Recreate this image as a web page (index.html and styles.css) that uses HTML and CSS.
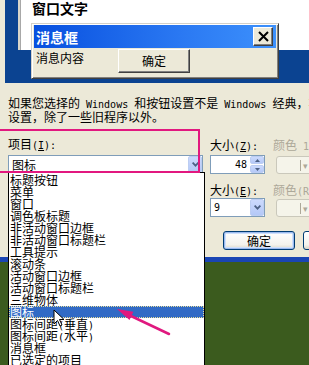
FILE: index.html
```html
<!DOCTYPE html>
<html>
<head>
<meta charset="utf-8">
<link rel="stylesheet" href="styles.css">
</head>
<body>
<div class="dialog">
  <div class="preview">
    <div class="win"><span class="wintext">窗口文字</span></div>
    <div class="msgbox">
      <div class="msg-title">
        <span class="msg-caption">消息框</span>
        <span class="close"><svg width="11" height="11" viewBox="0 0 11 11"><path d="M1 1L10 10M10 1L1 10" stroke="#000" stroke-width="2"/></svg></span>
      </div>
      <div class="msg-body">
        <span class="msg-text">消息内容</span>
        <span class="msg-btn">确定</span>
      </div>
    </div>
  </div>

  <p class="note">如果您选择的<span class="en"> Windows </span>和按钮设置不是<span class="en"> Windows </span>经典，将覆盖下列<br>设置，除了一些旧程序以外。</p>

  <div class="controls">
    <div class="col-item">
      <div class="label">项目<span class="en">(<u>I</u>):</span></div>
      <div class="combo wide">
        <span class="combo-text">图标</span>
        <span class="dd"><svg width="7" height="5" viewBox="0 0 7 5"><path d="M0.6 0.6L3.5 3.6L6.4 0.6" fill="none" stroke="#4d6185" stroke-width="1.8"/></svg></span>
      </div>
    </div>
    <div class="col-size">
      <div class="row lbl-row first">
        <span class="lbl">大小<span class="en">(<u>Z</u>):</span></span>
        <span class="lbl dis">颜色<span class="en"> 1</span></span>
      </div>
      <div class="row field-row">
        <div class="spin">
          <span class="spin-val en">48</span>
          <span class="spin-btns">
            <span class="sb"><svg width="5" height="3" viewBox="0 0 5 3"><path d="M0 3L2.5 0L5 3Z" fill="#4d6185"/></svg></span>
            <span class="sb"><svg width="5" height="3" viewBox="0 0 5 3"><path d="M0 0L2.5 3L5 0Z" fill="#4d6185"/></svg></span>
          </span>
        </div>
        <div class="colorbtn"><span class="sep"></span><span class="carrow">▾</span></div>
      </div>
      <div class="row lbl-row second">
        <span class="lbl">大小<span class="en">(<u>E</u>):</span></span>
        <span class="lbl dis">颜色<span class="en">(R)</span></span>
      </div>
      <div class="row field-row">
        <div class="combo small">
          <span class="combo-text en">9</span>
          <span class="dd"><svg width="7" height="5" viewBox="0 0 7 5"><path d="M0.6 0.6L3.5 3.6L6.4 0.6" fill="none" stroke="#4d6185" stroke-width="1.8"/></svg></span>
        </div>
        <div class="colorbtn"><span class="sep"></span><span class="carrow">▾</span></div>
      </div>
      <div class="row btn-row">
        <div class="xpbtn default">确定</div>
        <div class="xpbtn">取消</div>
      </div>
    </div>
  </div>
</div>

<ul class="droplist">
  <li>标题按钮</li>
  <li>菜单</li>
  <li>窗口</li>
  <li>调色板标题</li>
  <li>非活动窗口边框</li>
  <li>非活动窗口标题栏</li>
  <li>工具提示</li>
  <li>滚动条</li>
  <li>活动窗口边框</li>
  <li>活动窗口标题栏</li>
  <li>三维物体</li>
  <li class="sel">图标</li>
  <li>图标间距<span class="en">(</span>垂直<span class="en">)</span></li>
  <li>图标间距<span class="en">(</span>水平<span class="en">)</span></li>
  <li>消息框</li>
  <li>已选定的项目</li>
</ul>

<div class="pinkbox"></div>

<svg class="cursor" width="13" height="20" viewBox="0 0 13 20">
  <path d="M1 1L1 15L4.5 11.5L7 17L9 16L6.5 10.5L11 10.5Z" fill="#fff" stroke="#000" stroke-width="1" stroke-linejoin="round"/>
</svg>

<svg class="arrow" width="70" height="40" viewBox="0 0 70 40">
  <path d="M21 16L59 34" stroke="#e0197f" stroke-width="2.5" stroke-linecap="round"/>
  <path d="M7 9L23.4 11.8L19.5 20Z" fill="#e0197f"/>
</svg>
</body>
</html>
```

FILE: styles.css
```css
* {
  box-sizing: border-box;
}

html, body {
  margin: 0;
  padding: 0;
}

body {
  width: 309px;
  height: 365px;
  overflow: hidden;
  position: relative;
  background: #3b5b1e;
  font-family: "Noto Sans CJK SC", sans-serif;
  font-size: 12px;
  line-height: 12px;
  color: #000;
}

.en {
  font-family: "DejaVu Sans Mono", monospace;
  font-size: 10px;
}

.dialog {
  height: 262px;
  background: #ece9d8;
  border-bottom: 5px solid #1a45b4;
  overflow: hidden;
}

/* preview */
.preview {
  position: relative;
  margin-left: 5px;
  height: 83px;
  background: #0b4391;
  overflow: hidden;
}

.win {
  position: absolute;
  left: 13px;
  top: -10px;
  right: -10px;
  height: 60px;
  background: #fff;
  border-left: 2px solid #d8d5ca;
  box-shadow: inset 1px 0 #a8a8a8;
  padding: 11px 0 0 12px;
  font-size: 14px;
  line-height: 14px;
  font-weight: bold;
}

.msgbox {
  position: absolute;
  left: 26px;
  top: 23px;
  width: 248px;
  height: 56px;
  background: #ece9d8;
  border: 1px solid;
  border-color: #d4d0c8 #404040 #404040 #d4d0c8;
  box-shadow: inset 1px 1px #fff, inset -1px -1px #808080;
  padding: 1px 2px 2px 2px;
}

.msg-title {
  height: 23px;
  background: linear-gradient(to right, #0850df, #2a78f2 60%, #3d91fc);
  display: flex;
  align-items: center;
  justify-content: space-between;
  padding-left: 2px;
}

.msg-caption {
  color: #fff;
  font-weight: bold;
  font-size: 14px;
  line-height: 14px;
}

.close {
  width: 20px;
  height: 19px;
  margin-right: 3px;
  background: #ece9d8;
  border: 1px solid;
  border-color: #fff #404040 #404040 #fff;
  box-shadow: inset -1px -1px #808080;
  display: flex;
  align-items: center;
  justify-content: center;
}

.msg-body {
  display: flex;
  align-items: flex-start;
}

.msg-text {
  padding: 4px 0 0 2px;
}

.msg-btn {
  margin: 1px 0 0 34px;
  width: 72px;
  height: 24px;
  background: #ece9d8;
  border: 1px solid;
  border-color: #fff #404040 #404040 #fff;
  box-shadow: inset -1px -1px #808080;
  text-align: center;
  line-height: 21px;
}

/* note */
.note {
  margin: 14px 0 0;
  padding-left: 8px;
  white-space: nowrap;
  line-height: 12px;
}

/* controls */
.controls {
  display: flex;
  gap: 7px;
  padding-left: 8px;
  margin-top: 15px;
}

.col-item {
  width: 195px;
  flex: none;
}

.label {
  height: 12px;
}

.combo {
  position: relative;
  margin-top: 5px;
  height: 19px;
  background: #fff;
  border: 1px solid #7f9db9;
  display: flex;
  align-items: center;
  justify-content: space-between;
}

.combo-text {
  padding-left: 3px;
}

.dd {
  width: 14px;
  height: 17px;
  background: linear-gradient(#ccdafd, #b4c8f7);
  border: 1px solid #bccdf2;
  border-radius: 2px;
  display: flex;
  align-items: center;
  justify-content: center;
}

.col-size {
  flex: none;
  width: 110px;
}

.row {
  display: flex;
  gap: 8px;
  white-space: nowrap;
}

.row > :first-child {
  width: 55px;
  flex: none;
}

.lbl-row {
  height: 12px;
}

.lbl-row.first {
  margin-top: 1px;
}

.lbl-row.second {
  margin-top: 10px;
}

.field-row {
  margin-top: 4px;
  height: 19px;
}

.lbl-row.second + .field-row {
  margin-top: 2px;
}

.dis {
  color: #aca899;
}

.spin {
  height: 19px;
  background: #fff;
  border: 1px solid #7f9db9;
  display: flex;
  align-items: center;
  justify-content: flex-end;
}

.spin-val {
  padding-right: 3px;
}

.spin-btns {
  width: 14px;
  height: 17px;
  display: flex;
  flex-direction: column;
  gap: 1px;
}

.sb {
  flex: 1;
  background: linear-gradient(#ccdafd, #b4c8f7);
  border: 1px solid #bccdf2;
  border-radius: 2px;
  display: flex;
  align-items: center;
  justify-content: center;
}

.field-row .combo {
  margin-top: 0;
}

.colorbtn {
  margin: 1px 0 0 3px;
  width: 45px;
  height: 18px;
  flex: none;
  border: 1px solid #cac8bb;
  border-radius: 3px;
  background: #f5f4ea;
  display: flex;
  align-items: center;
  padding-left: 23px;
  gap: 2px;
}

.sep {
  width: 1px;
  height: 11px;
  background: #aca899;
}

.carrow {
  color: #aca899;
  font-size: 9px;
  line-height: 9px;
}

.btn-row {
  margin-top: 14px;
  padding-left: 13px;
}

.btn-row > :first-child {
  width: 72px;
}

.xpbtn {
  flex: none;
  width: 72px;
  height: 19px;
  border: 1px solid #003c74;
  border-radius: 3px;
  background: linear-gradient(#ffffff, #f3f2ec 75%, #d9d5c7);
  text-align: center;
  line-height: 17px;
}

.xpbtn.default {
  box-shadow: inset 0 0 0 1px #9ab9ee, inset 0 0 0 2px #cfe0fb;
}

/* dropdown list */
.droplist {
  position: absolute;
  left: 8px;
  top: 172px;
  width: 197px;
  height: 210px;
  margin: 0;
  padding: 1px 0 0;
  list-style: none;
  background: #fff;
  border: 1px solid #000;
}

.droplist li {
  height: 12px;
  line-height: 12px;
  padding-left: 1px;
  white-space: nowrap;
}

.droplist li.sel {
  background: #316ac5;
  color: #fff;
  outline: 1px dotted #e6dc9a;
  outline-offset: -1px;
}

.pinkbox {
  position: absolute;
  left: -3px;
  top: 129px;
  width: 203px;
  height: 44px;
  border: 2px solid #e2187f;
}

.cursor {
  position: absolute;
  left: 53px;
  top: 309px;
}

.arrow {
  position: absolute;
  left: 110px;
  top: 300px;
}
```
